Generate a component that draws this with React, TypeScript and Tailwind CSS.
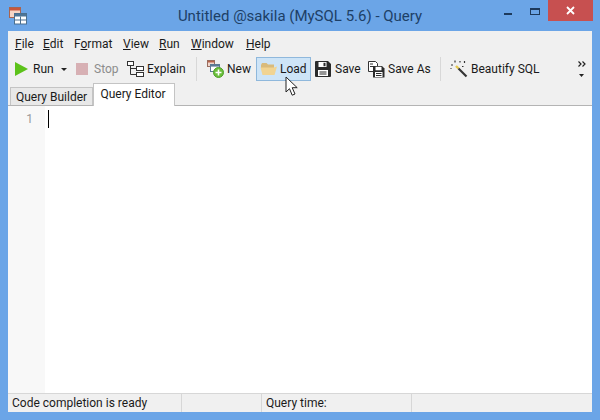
import React from "react";

const font = "font-['Roboto','Noto_Sans',sans-serif]";

function Sep({ className }: { className: string }) {
  return <div className={`h-[24px] w-px shrink-0 bg-[#d8d8d8] ${className}`} />;
}

function AppIcon() {
  return (
    <svg width="18" height="18" viewBox="0 0 18 18">
      <rect x="0.5" y="0.5" width="11" height="10" fill="#f6d5c6" stroke="#a9644f" />
      <rect x="1" y="1" width="10" height="2.5" fill="#c8573c" />
      <rect x="5.5" y="6.5" width="12" height="10.5" fill="#ffffff" stroke="#4a6f8f" />
      <rect x="6" y="7" width="11" height="2.5" fill="#4d7597" />
      <path d="M11.5 9.5V17M6 13h11" stroke="#4a6f8f" />
    </svg>
  );
}

function ExplainIcon() {
  return (
    <svg width="17" height="16" viewBox="0 0 17 16" fill="none" stroke="#333">
      <rect x="0.5" y="0.5" width="6" height="4" fill="#fff" />
      <rect x="9.5" y="5.5" width="7" height="4" fill="#fff" />
      <rect x="9.5" y="11.5" width="7" height="4" fill="#fff" />
      <path d="M3.5 5v8.500h6M3.500 7.500h6" />
    </svg>
  );
}

function NewIcon() {
  return (
    <svg width="17" height="18" viewBox="0 0 17 18">
      <rect x="0.5" y="0.5" width="7" height="6" fill="#f0d8ce" stroke="#9a6d5f" />
      <rect x="1" y="1" width="6" height="1.5" fill="#b9634a" />
      <rect x="3.5" y="4.5" width="9" height="7" fill="#fff" stroke="#5b7a94" />
      <rect x="4" y="5" width="8" height="1.6" fill="#5b7a94" />
      <circle cx="11.5" cy="12.5" r="5" fill="#6abf3a" stroke="#4f9f2b" />
      <path d="M11.5 9.500v6M8.500 12.500h6" stroke="#fff" strokeWidth="1.600" />
    </svg>
  );
}

function FolderIcon() {
  return (
    <svg width="17" height="14" viewBox="0 0 17 14">
      <path d="M1 3 2 1h4.500L8 2.500h6V6H1z" fill="#d9bb7c" />
      <path d="M0.500 5.500h13.500L17 4.500 14.500 13H2.500z" fill="#f1d492" />
    </svg>
  );
}

function SaveIcon() {
  return (
    <svg width="17" height="16" viewBox="0 0 17 16">
      <path d="M0 1a1 1 0 0 1 1-1h12l3 3v12a1 1 0 0 1-1 1H1a1 1 0 0 1-1-1z" fill="#2b2b2b" />
      <rect x="3.500" y="1" width="8" height="5" fill="#fff" />
      <rect x="8.500" y="1.800" width="2" height="3.400" fill="#2b2b2b" />
      <rect x="3" y="9" width="10" height="6" fill="#fff" />
      <path d="M4.500 11h7M4.500 13h7" stroke="#2b2b2b" />
    </svg>
  );
}

function SaveAsIcon() {
  return (
    <svg width="17" height="18" viewBox="0 0 17 18">
      <path d="M0.500 1.500h7l2 2v8h-9z" fill="#fff" stroke="#333" />
      <path d="M2 4h3M2 6.500h3" stroke="#333" />
      <path d="M5 6h9l2.500 2.500V17a.5.5 0 0 1-.5.5H5.500A.5.5 0 0 1 5 17z" fill="#2b2b2b" />
      <rect x="7.500" y="6.800" width="6" height="3.500" fill="#fff" />
      <rect x="7" y="12" width="7.500" height="5" fill="#fff" />
      <path d="M8 13.500h5.500M8 15.500h5.500" stroke="#2b2b2b" />
    </svg>
  );
}

function WandIcon() {
  return (
    <svg width="18" height="18" viewBox="0 0 18 18">
      <path d="M6 6l2.500 2.500" stroke="#e6c84a" strokeWidth="2.400" />
      <path d="M8.500 8.500l8 8" stroke="#333" strokeWidth="2.200" />
      <path d="M1 5h2M5 0.500v2M10 1v1.500M14.500 1v2M12 6.500h1.500M0.500 8.500h1" stroke="#333" strokeWidth="1.200" />
    </svg>
  );
}

function Cursor() {
  return (
    <svg className="absolute left-[285px] top-[76px]" width="15" height="21" viewBox="0 0 15 21">
      <path d="M1 1v15l3.500-3.300 2.700 6.500 2.800-1.200-2.800-6.300h5z" fill="#fff" stroke="#222" strokeLinejoin="round" />
    </svg>
  );
}

function Tool({ icon, label, dim, active, textWidth }: { icon: React.ReactNode; label: string; dim?: boolean; active?: boolean; textWidth: string }) {
  return (
    <div
      className={`flex h-[24px] shrink-0 items-center gap-[3px] border pl-[3px] pr-[4px] ${
        active ? "border-[#8fb8dc] bg-[#cde4f7]" : "border-transparent"
      }`}
    >
      {icon}
      <span className={`whitespace-nowrap ${textWidth} ${dim ? "text-[#8c8c8c]" : "text-[#1a1a1a]"}`}>{label}</span>
    </div>
  );
}

export default function App() {
  const menus = [
    { name: "File", at: 0, w: "w-[28px]" },
    { name: "Edit", at: 0, w: "w-[31px]" },
    { name: "Format", at: 1, w: "w-[49px]" },
    { name: "View", at: 0, w: "w-[36px]" },
    { name: "Run", at: 0, w: "w-[32px]" },
    { name: "Window", at: 0, w: "w-[55px]" },
    { name: "Help", at: 0, w: "w-[32px]" },
  ];

  return (
    <div className={`${font} relative flex h-[420px] w-[600px] flex-col overflow-hidden bg-[#6ba5e7] text-[12px] leading-none text-[#1a1a1a]`}>
      {/* title bar */}
      <div className="flex h-[31px] shrink-0 items-start">
        <div className="w-[120px] pl-[9px] pt-[7px]">
          <AppIcon />
        </div>
        <div className="flex-1 pt-[9px] text-center text-[15px] text-[#1d3f66]">Untitled @sakila (MySQL 5.6) - Query</div>
        <div className="flex w-[120px] items-start justify-end pr-[7px]">
          <div className="mr-[18px] mt-[13px] h-[2px] w-[8px] bg-[#1d3a5c]" />
          <div className="mr-[8px] mt-[8px] h-[7px] w-[10px] border border-t-2 border-[#1d3a5c]" />
          <div className="flex h-[21px] w-[45px] items-center justify-center bg-[#c75050]">
            <svg width="9" height="9" viewBox="0 0 9 9">
              <path d="M1 1l7 7M8 1L1 8" stroke="#fff" strokeWidth="1.800" />
            </svg>
          </div>
        </div>
      </div>

      {/* client area */}
      <div className="mx-[8px] flex min-h-0 flex-1 flex-col bg-[#f0f0f0]">
        <div className="flex h-[25px] shrink-0 items-center pl-[7px] pt-[1px]">
          {menus.map((m) => (
            <span key={m.name} className={m.w}>
              {m.name.slice(0, m.at)}
              <span className="underline">{m.name[m.at]}</span>
              {m.name.slice(m.at + 1)}
            </span>
          ))}
        </div>

        <div className="flex h-[26px] shrink-0 items-center pl-[3px]">
          <Tool
            label="Run"
            textWidth="w-[21px]"
            icon={
              <svg width="14" height="14" viewBox="0 0 14 14" className="mr-[1px]">
                <path d="M0 0l13 7-13 7z" fill="#5cc21a" />
              </svg>
            }
          />
          <svg width="6" height="3" viewBox="0 0 6 3" className="ml-[2px] mr-[5px] shrink-0">
            <path d="M0 0h6L3 3z" fill="#222" />
          </svg>
          <Tool label="Stop" dim textWidth="w-[24px]" icon={<div className="mr-[3px] h-[12px] w-[12px] bg-[#d7b0b4]" />} />
          <Tool label="Explain" textWidth="w-[37px]" icon={<ExplainIcon />} />
          <Sep className="ml-[7px] mr-[6px]" />
          <Tool label="New" textWidth="w-[24px]" icon={<NewIcon />} />
          <Tool label="Load" active textWidth="w-[26px]" icon={<FolderIcon />} />
          <Tool label="Save" textWidth="w-[24px]" icon={<SaveIcon />} />
          <Tool label="Save As" textWidth="w-[40px]" icon={<SaveAsIcon />} />
          <Sep className="ml-[7px] mr-[5px]" />
          <Tool label="Beautify SQL" textWidth="w-[66px]" icon={<WandIcon />} />
          <div className="ml-auto flex w-[14px] shrink-0 flex-col items-start gap-[7px]">
            <svg width="8" height="6" viewBox="0 0 8 6" fill="none" stroke="#222" strokeWidth="1.200">
              <path d="M.5.500 3 3 .5 5.500M4.500.500 7 3 4.500 5.500" />
            </svg>
            <svg width="5" height="3" viewBox="0 0 5 3" className="ml-[1px]">
              <path d="M0 0h5L2.500 3z" fill="#222" />
            </svg>
          </div>
        </div>

        {/* tabs */}
        <div className="flex h-[24px] shrink-0 items-end border-b border-[#b4b4b4] pl-[2px]">
          <div className="flex h-[18px] w-[83px] items-center justify-center border border-b-0 border-[#c4c4c4] bg-[#e8e8e8]">Query Builder</div>
          <div className="relative -mb-px flex h-[23px] w-[82px] items-center justify-center border border-b-0 border-[#c4c4c4] bg-white pb-[3px] pr-[2px]">
            Query Editor
          </div>
        </div>

        {/* editor */}
        <div className="flex min-h-0 flex-1 bg-white">
          <div className="flex w-[37px] justify-end bg-[#f8f8f8] pr-[12px] pt-[7px] text-[#9a9a9a]">1</div>
          <div className="pl-[3px] pt-[4px]">
            <div className="h-[18px] w-px bg-black" />
          </div>
        </div>

        {/* status bar */}
        <div className="flex h-[19px] shrink-0 items-center border-t border-[#d7d7d7]">
          <div className="flex h-full w-[174px] items-center border-r border-[#d7d7d7] pl-[4px]">Code completion is ready</div>
          <div className="h-full w-[80px] border-r border-[#d7d7d7]" />
          <div className="flex h-full w-[150px] items-center border-r border-[#d7d7d7] pl-[4px]">Query time:</div>
        </div>
      </div>
      <div className="h-[8px] shrink-0" />
      <Cursor />
    </div>
  );
}
